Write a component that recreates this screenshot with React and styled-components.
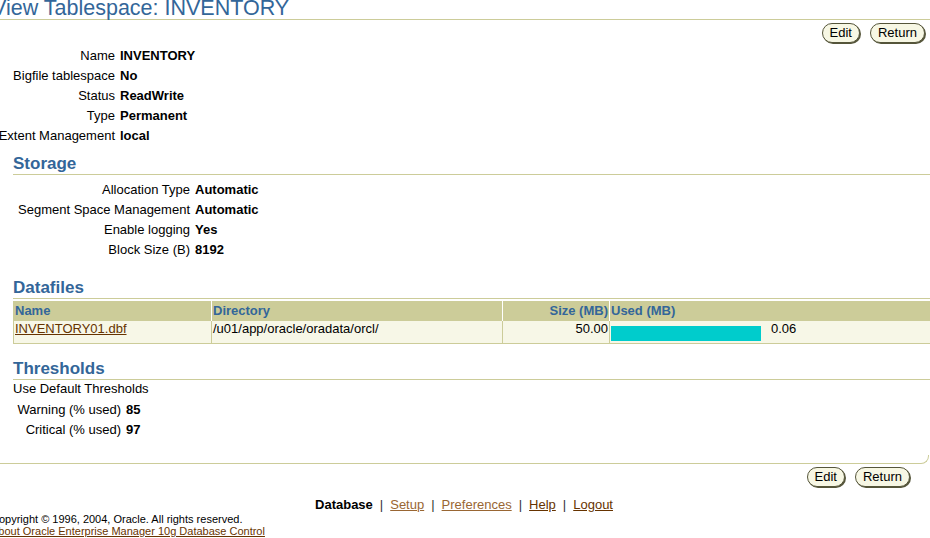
import React from 'react';
import styled, { createGlobalStyle } from 'styled-components';

const GlobalStyle = createGlobalStyle`
    body {
        margin: 0;
        background: #fff;
        overflow: hidden;
        font-family: "Liberation Sans", Arial, sans-serif;
        font-size: 13px;
        color: #000;
    }
`;

const Page = styled.div`
    margin-left: -9px;
`;

const PageTitle = styled.h1`
    margin: -2px 0 0;
    padding-left: 1px;
    font: 400 21.5px/21px "Liberation Sans", Arial, sans-serif;
    color: #336699;
    border-bottom: 1px solid #cccc99;
`;

const ButtonBar = styled.div`
    display: flex;
    justify-content: flex-end;
    gap: 10px;
    margin-top: 3px;
    padding-right: ${(p) => p.inset}px;
`;

const PillButton = styled.button`
    height: 20px;
    padding: 0 7px;
    font: 13px/18px "Liberation Sans", Arial, sans-serif;
    color: #000;
    background: #f7f7e4;
    border: 1px solid #55553a;
    border-radius: 10px;
    box-shadow: 1px 1px 0 #55553a;
    cursor: pointer;
`;

const PropGrid = styled.div`
    display: grid;
    grid-template-columns: ${(p) => p.labelWidth}px auto;
    justify-content: start;
    column-gap: 5px;
    grid-auto-rows: 20px;
    align-items: center;
    margin-top: ${(p) => p.top || 0}px;
`;

const Label = styled.div`
    text-align: right;
    white-space: nowrap;
`;

const Value = styled.div`
    font-weight: 700;
    white-space: nowrap;
`;

const Section = styled.div`
    padding-left: 22px;
    margin-top: ${(p) => p.top}px;
`;

const SectionHeader = styled.h2`
    margin: 0;
    font: 700 17px/20px "Liberation Sans", Arial, sans-serif;
    color: #336699;
    border-bottom: 1px solid #cccc99;
`;

const PlainLine = styled.div`
    line-height: 20px;
    margin-top: -1px;
`;

const Table = styled.table`
    width: calc(100% + 4px);
    margin-top: 2px;
    border-collapse: collapse;
    border: 1px solid #cccc99;
    table-layout: fixed;
`;

const HeadCell = styled.th`
    height: 18px;
    padding: 0 1px;
    font: 700 13px/18px "Liberation Sans", Arial, sans-serif;
    color: #336699;
    background: #cccc99;
    text-align: ${(p) => p.align || 'left'};
    border-left: 1px solid #fff;
    &:first-child {
        border-left: 1px solid #cccc99;
    }
`;

const DataCell = styled.td`
    height: 22px;
    padding: 0 1px;
    vertical-align: top;
    line-height: 16px;
    background: #f7f7e7;
    text-align: ${(p) => p.align || 'left'};
    border: 1px solid #cccc99;
    white-space: nowrap;
`;

const FileLink = styled.a`
    color: #663300;
    text-decoration: underline;
`;

const UsedWrap = styled.div`
    display: flex;
    align-items: flex-start;
`;

const UsageBar = styled.div`
    height: 15px;
    margin-top: 5px;
    background: #00cccc;
`;

const UsedValue = styled.span`
    margin-left: 10px;
`;

const BottomRule = styled.div`
    height: 8px;
    margin-top: 16px;
    margin-right: 1px;
    border-bottom: 1px solid #cccc99;
    border-right: 1px solid #cccc99;
    border-bottom-right-radius: 8px;
`;

const FooterNav = styled.div`
    margin-top: 10px;
    padding-left: 7px;
    text-align: center;
    line-height: 16px;
`;

const NavCurrent = styled.b`
    color: #000;
`;

const NavLink = styled.a`
    color: ${(p) => (p.visited ? '#996633' : '#663300')};
    text-decoration: underline;
`;

const Pipe = styled.span`
    padding: 0 7px;
    color: #333;
`;

const FooterLine = styled.div`
    font-size: 11px;
    line-height: 12px;
`;

const AboutLink = styled.a`
    color: #663300;
    text-decoration: underline;
`;

const general = [
    ['Name', 'INVENTORY'],
    ['Bigfile tablespace', 'No'],
    ['Status', 'ReadWrite'],
    ['Type', 'Permanent'],
    ['Extent Management', 'local'],
];

const storage = [
    ['Allocation Type', 'Automatic'],
    ['Segment Space Management', 'Automatic'],
    ['Enable logging', 'Yes'],
    ['Block Size (B)', '8192'],
];

const thresholds = [
    ['Warning (% used)', '85'],
    ['Critical (% used)', '97'],
];

const datafiles = [
    { name: 'INVENTORY01.dbf', dir: '/u01/app/oracle/oradata/orcl/', size: '50.00', used: '0.06', bar: 150 },
];

const Props = ({ rows, labelWidth, top }) => (
    <PropGrid labelWidth={labelWidth} top={top}>
        {rows.map(([label, value]) => (
            <React.Fragment key={label}>
                <Label>{label}</Label>
                <Value>{value}</Value>
            </React.Fragment>
        ))}
    </PropGrid>
);

const Buttons = ({ inset }) => (
    <ButtonBar inset={inset}>
        <PillButton>Edit</PillButton>
        <PillButton>Return</PillButton>
    </ButtonBar>
);

const App = () => {
    return (
        <Page>
            <GlobalStyle />
            <PageTitle>View Tablespace: INVENTORY</PageTitle>
            <Buttons inset={5} />
            <Props rows={general} labelWidth={124} top={2} />

            <Section top={9}>
                <SectionHeader>Storage</SectionHeader>
                <Props rows={storage} labelWidth={177} top={4} />
            </Section>

            <Section top={19}>
                <SectionHeader>Datafiles</SectionHeader>
                <Table>
                    <colgroup>
                        <col style={{ width: 198 }} />
                        <col style={{ width: 291 }} />
                        <col style={{ width: 107 }} />
                        <col />
                    </colgroup>
                    <thead>
                        <tr>
                            <HeadCell>Name</HeadCell>
                            <HeadCell>Directory</HeadCell>
                            <HeadCell align="right">Size (MB)</HeadCell>
                            <HeadCell>Used (MB)</HeadCell>
                        </tr>
                    </thead>
                    <tbody>
                        {datafiles.map((f) => (
                            <tr key={f.name}>
                                <DataCell><FileLink href="#">{f.name}</FileLink></DataCell>
                                <DataCell>{f.dir}</DataCell>
                                <DataCell align="right">{f.size}</DataCell>
                                <DataCell>
                                    <UsedWrap>
                                        <UsageBar style={{ width: f.bar }} />
                                        <UsedValue>{f.used}</UsedValue>
                                    </UsedWrap>
                                </DataCell>
                            </tr>
                        ))}
                    </tbody>
                </Table>
            </Section>

            <Section top={15}>
                <SectionHeader>Thresholds</SectionHeader>
                <PlainLine>Use Default Thresholds</PlainLine>
                <Props rows={thresholds} labelWidth={108} />
            </Section>

            <BottomRule />
            <Buttons inset={20} />

            <FooterNav>
                <NavCurrent>Database</NavCurrent>
                <Pipe>|</Pipe>
                <NavLink href="#" visited>Setup</NavLink>
                <Pipe>|</Pipe>
                <NavLink href="#" visited>Preferences</NavLink>
                <Pipe>|</Pipe>
                <NavLink href="#">Help</NavLink>
                <Pipe>|</Pipe>
                <NavLink href="#">Logout</NavLink>
            </FooterNav>
            <FooterLine>Copyright © 1996, 2004, Oracle. All rights reserved.</FooterLine>
            <FooterLine>
                <AboutLink href="#">About Oracle Enterprise Manager 10g Database Control</AboutLink>
            </FooterLine>
        </Page>
    );
};

export default App;
